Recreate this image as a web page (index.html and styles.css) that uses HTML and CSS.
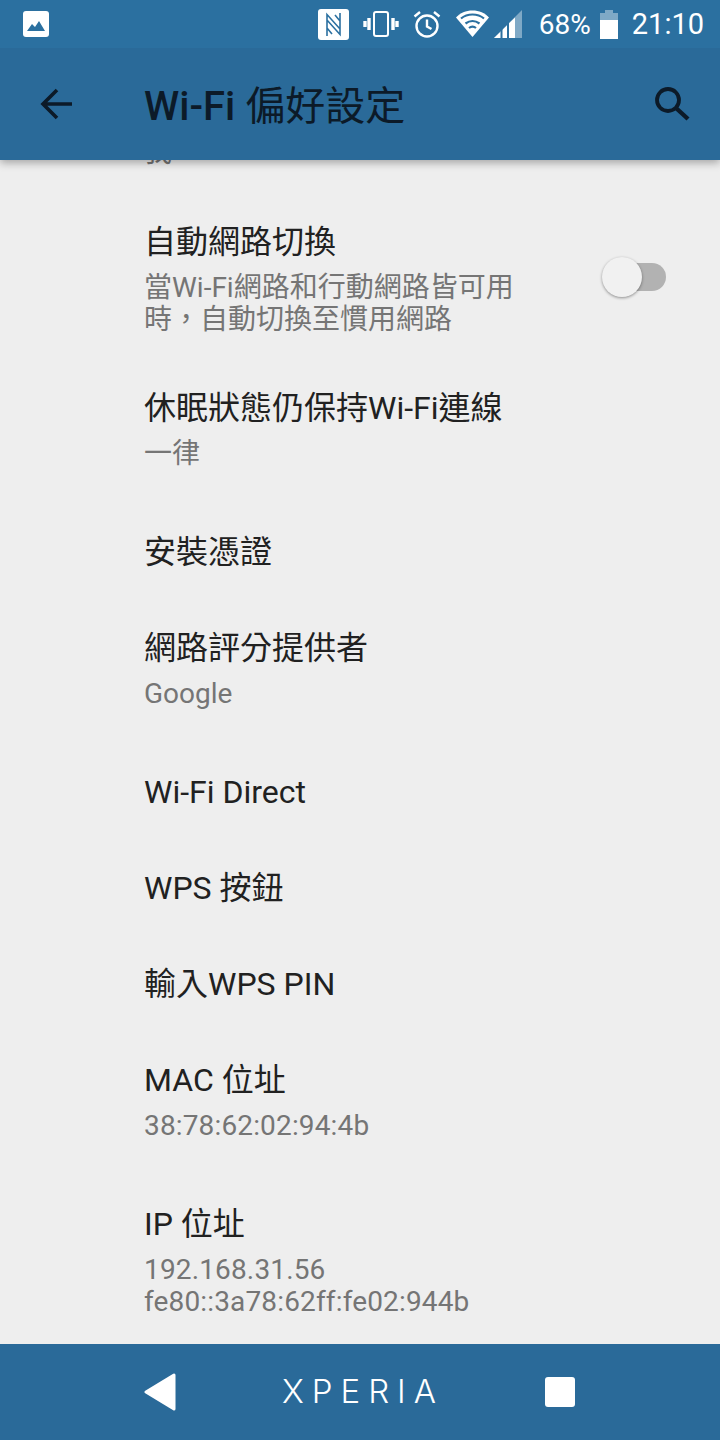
FILE: index.html
```html
<!DOCTYPE html>
<html lang="zh-Hant">
<head>
<meta charset="utf-8">
<title>Wi-Fi 偏好設定</title>
<link rel="stylesheet" href="styles.css">
</head>
<body>
<div class="phone">

<div class="status-bar">
<svg class="ic-image" viewBox="0 0 26 26"><rect width="26" height="26" rx="3" fill="#fff"/><path d="M4 20l5-7 3 3 4-6 6 10z" fill="#2b70a0"/></svg>
<div class="status-right">
<svg class="ic-nfc" viewBox="0 0 31 31"><rect width="31" height="31" rx="3" fill="#fff"/><path d="M9 27V5.500L22 20v-8l-5-6M22 4v21.500L9 11v8l5 6" fill="none" stroke="#2b70a0" stroke-width="1.600"/></svg>
<svg class="ic-vibrate" viewBox="0 0 36 26"><rect x="11" y="1" width="14" height="24" rx="2" fill="none" stroke="#fff" stroke-width="2"/><path d="M6 7v12M2 10v6M30 7v12M34 10v6" stroke="#fff" stroke-width="3.400"/></svg>
<svg class="ic-alarm" viewBox="0 0 28 28"><circle cx="14" cy="16" r="10.500" fill="none" stroke="#fff" stroke-width="2.400"/><path d="M14 9.500V16.500l4.500 2.500M1.500 6.500L7 2M26.500 6.500L21 2" fill="none" stroke="#fff" stroke-width="2.400"/></svg>
<svg class="ic-wifi" viewBox="0 0 33 28"><path d="M16.500 27L0 7.500C4 3 10 .5 16.500 .5S29 3 33 7.500z" fill="#fff"/><path d="M5 8.500C8 6 12 4.500 16.500 4.500S25 6 28 8.500M9.500 13.500C11.500 12 14 11 16.500 11s5 1 7 2.500M13 18c1-.8 2.200-1.300 3.500-1.300s2.500.5 3.500 1.300" fill="none" stroke="#2b70a0" stroke-width="2.200"/></svg>
<svg class="ic-signal" viewBox="0 0 28 28"><path d="M28 0v28H0z" fill="#fff" opacity=".4"/><path d="M21 7.500V28H0z" fill="#fff"/><path d="M6.500 20.500V28h2v-9.500zM13 14v14h2V12z" fill="#2b70a0"/></svg>
<span class="battery-text">68%</span>
<svg class="ic-battery" viewBox="0 0 18 29"><path d="M5 0h8v3h5v26H0V3h5z" fill="#fff" opacity=".4"/><rect y="10" width="18" height="19" fill="#fff"/></svg>
<span class="clock">21:10</span>
</div>
</div>

<div class="app-bar">
<svg class="ic-back" viewBox="0 0 32 32"><path d="M32 16H3M17 2L3 16l14 14" fill="none" stroke="#0c1a28" stroke-width="3.600"/></svg>
<div class="app-title"><b>Wi-Fi</b> 偏好設定</div>
<svg class="ic-search" viewBox="0 0 36 36"><circle cx="14" cy="14" r="11" fill="none" stroke="#0c1a28" stroke-width="3.800"/><path d="M22 22l12 11" stroke="#0c1a28" stroke-width="4.400"/></svg>
</div>

<div class="content">

<div class="item cut">
<div class="summary">我</div>
</div>

<div class="item wrapped">
<div class="item-text">
<div class="name">自動網路切換</div>
<div class="summary">當Wi-Fi網路和行動網路皆可用時，自動切換至慣用網路</div>
</div>
<div class="switch"><div class="switch-thumb"></div></div>
</div>

<div class="item with-summary">
<div class="name">休眠狀態仍保持Wi-Fi連線</div>
<div class="summary">一律</div>
</div>

<div class="item">
<div class="name">安裝憑證</div>
</div>

<div class="item with-summary">
<div class="name">網路評分提供者</div>
<div class="summary">Google</div>
</div>

<div class="item">
<div class="name">Wi-Fi Direct</div>
</div>

<div class="item">
<div class="name">WPS 按鈕</div>
</div>

<div class="item">
<div class="name">輸入WPS PIN</div>
</div>

<div class="item with-summary">
<div class="name">MAC 位址</div>
<div class="summary numbers">38:78:62:02:94:4b</div>
</div>

<div class="item with-summary">
<div class="name">IP 位址</div>
<div class="summary numbers">192.168.31.56<br>fe80::3a78:62ff:fe02:944b</div>
</div>

</div>

<div class="nav-bar">
<svg class="ic-nav-back" viewBox="0 0 32 38"><path d="M30 2v34L2 19z" fill="#fff" stroke="#fff" stroke-width="3" stroke-linejoin="round"/></svg>
<div class="xperia">XPERIA</div>
<div class="nav-square"></div>
</div>

</div>
</body>
</html>
```

FILE: styles.css
```css
html, body {
margin: 0;
padding: 0;
}

body {
font-family: Roboto, "Noto Sans CJK TC", sans-serif;
background: #eeeeee;
}

svg {
display: block;
flex: none;
}

.phone {
width: 720px;
height: 1440px;
display: flex;
flex-direction: column;
overflow: hidden;
}

/* status bar */
.status-bar {
height: 48px;
flex: none;
background: #2b70a0;
display: flex;
align-items: center;
justify-content: space-between;
padding: 0 16px 0 23px;
position: relative;
z-index: 3;
}

.status-right {
display: flex;
align-items: center;
color: #fff;
}

.ic-image {
width: 26px;
height: 26px;
margin-bottom: 1px;
}

.ic-nfc {
width: 31px;
height: 31px;
}

.ic-vibrate {
width: 36px;
height: 26px;
margin-left: 14px;
}

.ic-alarm {
width: 28px;
height: 28px;
margin-left: 14px;
}

.ic-wifi {
width: 33px;
height: 28px;
margin-left: 15px;
}

.ic-signal {
width: 28px;
height: 28px;
margin-left: 5px;
}

.battery-text {
font-size: 28px;
margin-left: 17px;
}

.ic-battery {
width: 18px;
height: 29px;
margin-left: 9px;
}

.clock {
font-size: 29px;
margin-left: 14px;
}

/* app bar */
.app-bar {
height: 112px;
flex: none;
background: #2a6a99;
display: flex;
align-items: center;
padding: 0 30px 0 40px;
box-shadow: 0 3px 8px rgba(0, 0, 0, 0.3);
position: relative;
z-index: 2;
}

.ic-back {
width: 32px;
height: 32px;
}

.app-title {
flex: 1;
margin-left: 72px;
margin-bottom: 2px;
font-size: 40px;
color: #0c1a28;
}

.app-title b {
font-weight: 500;
}

.ic-search {
width: 36px;
height: 36px;
}

/* list */
.content {
flex: 1;
min-height: 0;
overflow: hidden;
}

.item {
display: block;
padding: 27px 54px 25px 144px;
}

.item.with-summary {
padding-bottom: 33px;
}

.item.wrapped {
display: flex;
align-items: center;
padding-bottom: 23px;
}

.item.cut {
margin-top: -23px;
padding-top: 0;
padding-bottom: 24px;
}

.item-text {
flex: 1;
min-width: 0;
padding-right: 80px;
}

.name {
font-size: 32px;
line-height: 44px;
color: #212121;
}

.summary {
font-size: 28px;
line-height: 32px;
margin-top: 8px;
color: #757575;
}

.summary.numbers {
letter-spacing: 0.15px;
}

.item.cut .summary {
margin-top: 0;
}

.switch {
width: 52px;
height: 28px;
flex: none;
margin-left: 13px;
margin-bottom: 2px;
border-radius: 14px;
background: #b2b2b2;
position: relative;
}

.switch-thumb {
position: absolute;
left: -12px;
top: -6px;
width: 40px;
height: 40px;
border-radius: 50%;
background: #f1f1f1;
box-shadow: 0 1px 3px rgba(0, 0, 0, 0.4);
}

/* nav bar */
.nav-bar {
height: 96px;
flex: none;
background: #2a6a99;
display: flex;
align-items: center;
justify-content: space-between;
padding: 0 145px 0 144px;
}

.ic-nav-back {
width: 32px;
height: 38px;
}

.xperia {
font-family: Inter, sans-serif;
font-weight: 300;
font-size: 33px;
letter-spacing: 8px;
margin-bottom: 3px;
margin-left: 5px;
color: #fff;
}

.nav-square {
width: 30px;
height: 30px;
background: #fff;
border-radius: 3px;
}
```
